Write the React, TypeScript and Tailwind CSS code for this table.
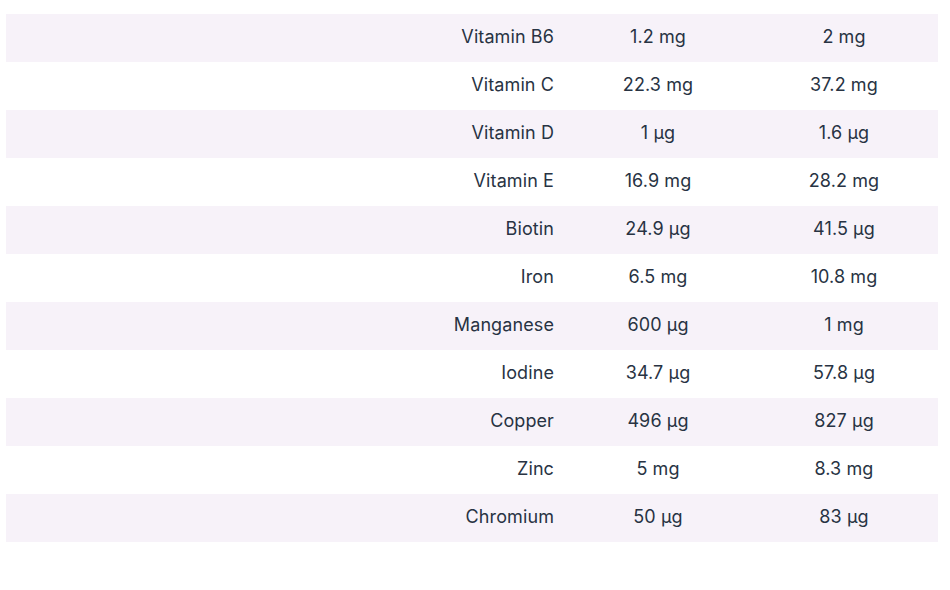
import React from 'react';

interface Nutrient {
    name: string;
    perServing: string;
    perDay: string;
}

const nutrients: Nutrient[] = [
    { name: 'Vitamin B6', perServing: '1.2 mg', perDay: '2 mg' },
    { name: 'Vitamin C', perServing: '22.3 mg', perDay: '37.2 mg' },
    { name: 'Vitamin D', perServing: '1 µg', perDay: '1.6 µg' },
    { name: 'Vitamin E', perServing: '16.9 mg', perDay: '28.2 mg' },
    { name: 'Biotin', perServing: '24.9 µg', perDay: '41.5 µg' },
    { name: 'Iron', perServing: '6.5 mg', perDay: '10.8 mg' },
    { name: 'Manganese', perServing: '600 µg', perDay: '1 mg' },
    { name: 'Iodine', perServing: '34.7 µg', perDay: '57.8 µg' },
    { name: 'Copper', perServing: '496 µg', perDay: '827 µg' },
    { name: 'Zinc', perServing: '5 mg', perDay: '8.3 mg' },
    { name: 'Chromium', perServing: '50 µg', perDay: '83 µg' },
];

const NutrientRow: React.FC<{ item: Nutrient; striped: boolean }> = ({ item, striped }) => (
    <div className={`grid grid-cols-[560px_184px_188px] h-12 pb-1 items-center ${striped ? 'bg-[#f7f2f9]' : 'bg-white'}`}>
        <span className="text-right pr-3">{item.name}</span>
        <span className="text-center">{item.perServing}</span>
        <span className="text-center">{item.perDay}</span>
    </div>
);

const App: React.FC = () => {
    return (
        <div className="w-[950px] h-[590px] bg-white pt-[14px] pl-[6px] text-[18px] tracking-[0.1px] text-[#283343] font-['Inter',sans-serif]">
            <div className="w-[932px]">
                {nutrients.map((n, i) => (
                    <NutrientRow key={n.name} item={n} striped={i % 2 === 0} />
                ))}
            </div>
        </div>
    );
};

export default App;
